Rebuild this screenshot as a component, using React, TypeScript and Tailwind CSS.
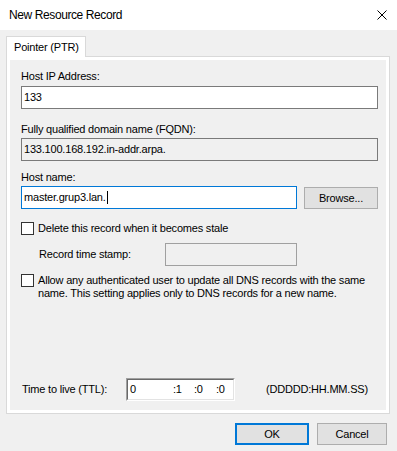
import React from "react";

const font = { fontFamily: '"Liberation Sans", Arial, sans-serif' };

function CloseIcon() {
  return (
    <svg width="10" height="10" viewBox="0 0 10 10" className="block">
      <path d="M0.5 0.5 L9.5 9.5 M9.5 0.5 L0.5 9.5" stroke="#000" strokeWidth="1" fill="none" />
    </svg>
  );
}

function Checkbox() {
  return <div className="w-[13px] h-[13px] shrink-0 border border-[#333] bg-white" />;
}

export default function App() {
  return (
    <div
      className="w-[397px] h-[451px] bg-[#f0f0f0] text-black text-[11px] leading-[13px] tracking-[-0.2px] overflow-hidden"
      style={font}
    >
      {/* title bar */}
      <div className="h-[30px] bg-white flex items-center justify-between pl-[9px] pr-[10px]">
        <span className="text-[12px] tracking-[-0.4px]">New Resource Record</span>
        <CloseIcon />
      </div>

      {/* tab strip */}
      <div className="pt-[6px] pl-[6px]">
        <div className="relative z-10 w-[80px] h-[21px] -mb-px bg-white border-t border-l border-r border-[#d9d9d9] flex items-center pl-[7px]">
          Pointer (PTR)
        </div>
        <div className="w-[384px] h-[358px] border border-[#d9d9d9] bg-white p-[3px]">
          <div className="h-full bg-[#f0f0f0] pl-[11px] flex flex-col">
            <div className="mt-[10px]">Host IP Address:</div>
            <div className="mt-[3px] w-[357px] h-[23px] bg-white border border-[#7a7a7a] flex items-center pl-[2px]">
              133
            </div>

            <div className="mt-[14px]">Fully qualified domain name (FQDN):</div>
            <div className="mt-[2px] w-[357px] h-[23px] bg-[#f0f0f0] border border-[#7a7a7a] flex items-center pl-[2px]">
              133.100.168.192.in-addr.arpa.
            </div>

            <div className="mt-[10px]">Host name:</div>
            <div className="mt-[2px] flex items-start gap-[7px]">
              <div className="w-[276px] h-[23px] bg-white border border-[#0078d7] flex items-center pl-[2px]">
                <span>master.grup3.lan.</span>
                <span className="w-px h-[13px] bg-black ml-px" />
              </div>
              <div className="mt-px w-[74px] h-[22px] bg-[#e1e1e1] border border-[#adadad] flex items-center justify-center">
                Browse...
              </div>
            </div>

            <div className="mt-[13px] flex items-center gap-[4px]">
              <Checkbox />
              <span>Delete this record when it becomes stale</span>
            </div>

            <div className="mt-[8px] flex items-center pl-[18px]">
              <span className="w-[126px]">Record time stamp:</span>
              <div className="w-[132px] h-[23px] border border-[#a0a0a0] bg-[#f0f0f0]" />
            </div>

            <div className="mt-[8px] flex items-start gap-[4px]">
              <Checkbox />
              <span>
                Allow any authenticated user to update all DNS records with the same
                <br />
                name. This setting applies only to DNS records for a new name.
              </span>
            </div>

            <div className="mt-[78px] flex items-center">
              <span className="w-[105px] pl-px">Time to live (TTL):</span>
              <div className="w-[109px] h-[23px] border-t border-l border-[#a0a0a0] border-r border-b border-r-white border-b-white">
                <div className="h-full border-t border-l border-[#696969] border-r border-b border-r-[#e3e3e3] border-b-[#e3e3e3] bg-white flex items-center pl-[2px]">
                  <span className="w-[43px]">0</span>
                  <span className="w-[21px]">:1</span>
                  <span className="w-[22px]">:0</span>
                  <span>:0</span>
                </div>
              </div>
              <span className="ml-[31px]">(DDDDD:HH.MM.SS)</span>
            </div>
          </div>
        </div>
      </div>

      {/* buttons */}
      <div className="mt-[9px] flex justify-end gap-[8px] pr-[10px]">
        <div className="w-[74px] h-[22px] bg-[#e1e1e1] border-2 border-[#0078d7] flex items-center justify-center">
          OK
        </div>
        <div className="w-[70px] h-[22px] bg-[#e1e1e1] border border-[#adadad] flex items-center justify-center">
          Cancel
        </div>
      </div>
    </div>
  );
}
